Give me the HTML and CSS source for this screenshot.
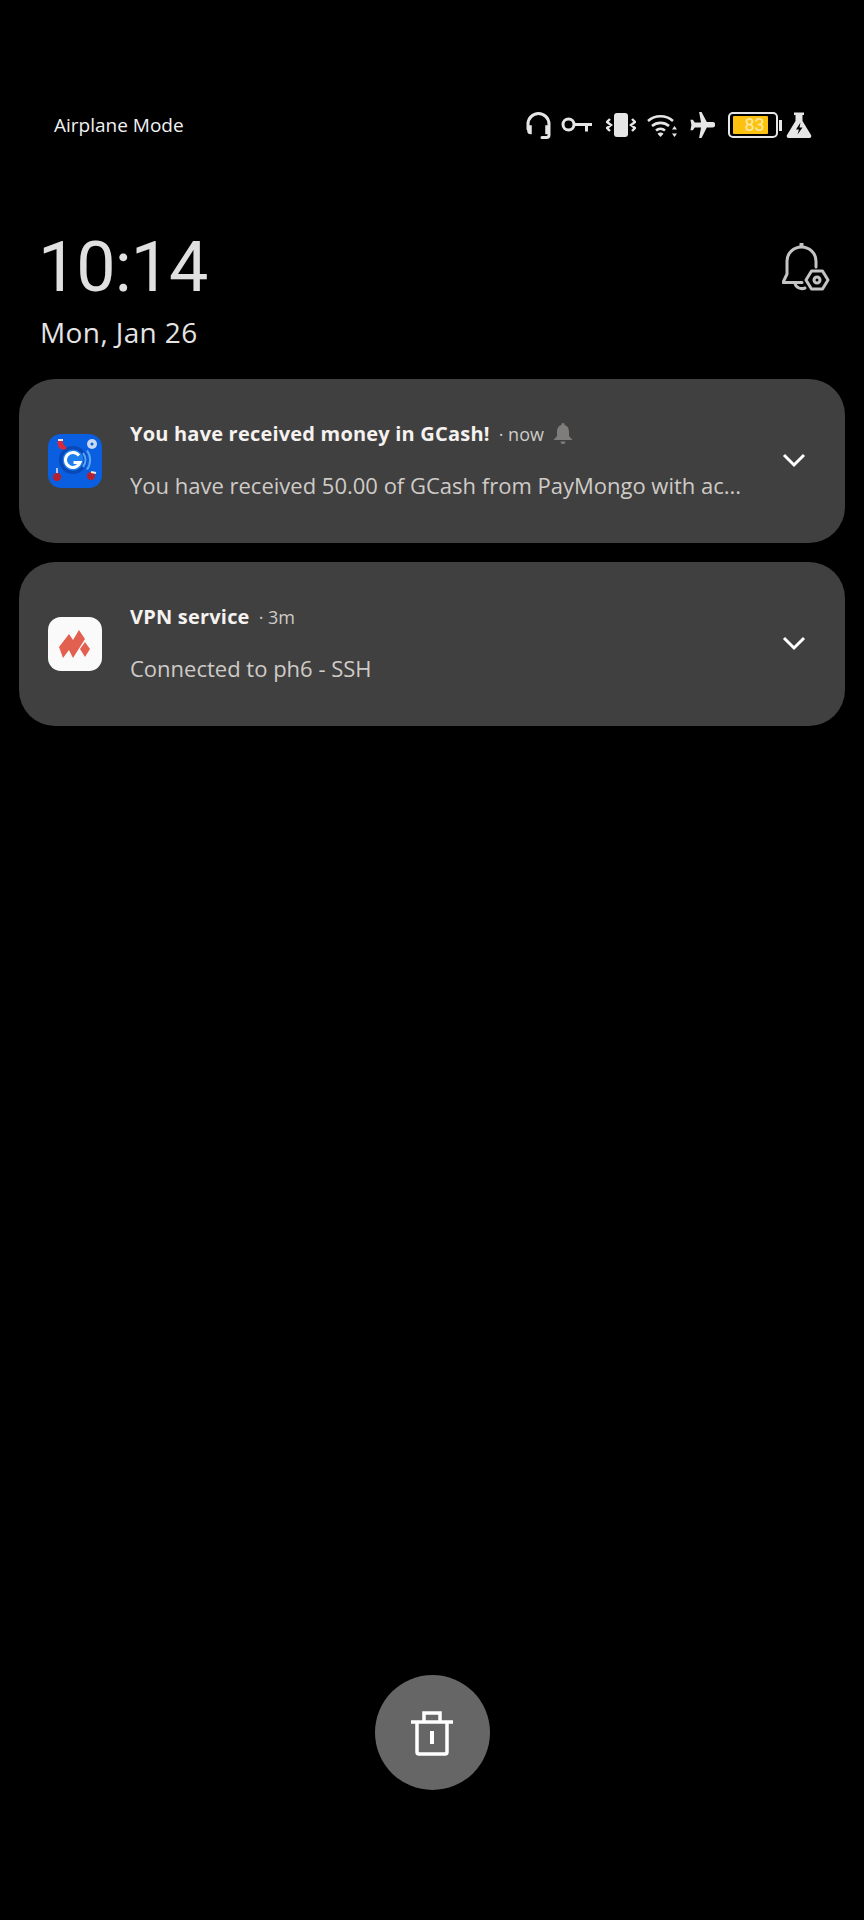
FILE: index.html
```html
<!DOCTYPE html>
<html lang="en">
<head>
    <meta charset="UTF-8">
    <meta name="viewport" content="width=device-width, initial-scale=1.0">
    <title>Notifications</title>
    <link rel="stylesheet" href="styles.css">
</head>
<body>
    <div class="screen">
        <div class="status-bar">
            <span class="carrier">Airplane Mode</span>
            <div class="status-icons">
                <svg class="icon-headset" width="27" height="28" viewBox="0 0 27 28" fill="none" stroke="#e6e6e6" stroke-width="3" stroke-linecap="round">
                    <path d="M3 18V13a10.500 10.500 0 0 1 21 0v11a2.500 2.500 0 0 1-2.500 2.500H17"/>
                    <path d="M3 15v5c0 1.500 1.500 2.500 3 2.500V15z" fill="#e6e6e6" stroke-width="1.500"/>
                    <path d="M24 15v6c0 1-1 1.500-3 1.500V15z" fill="#e6e6e6" stroke-width="1.500"/>
                </svg>
                <svg width="31" height="18" viewBox="0 0 31 18" fill="none" stroke="#e6e6e6" stroke-width="3">
                    <circle cx="7.500" cy="8.500" r="5.500"/>
                    <path d="M13 8.500h18M25.500 8.500v7"/>
                </svg>
                <svg class="icon-vibrate" width="30" height="26" viewBox="0 0 30 26" fill="none" stroke="#e6e6e6" stroke-width="2.400">
                    <rect x="8" y="1" width="14" height="24" rx="3" fill="#e6e6e6" stroke="none"/>
                    <path d="M4 7l-3 3 4 3-4 3 3 3M26 7l3 3-4 3 4 3-3 3"/>
                </svg>
                <svg width="31" height="25" viewBox="0 0 31 25" fill="none" stroke="#e6e6e6" stroke-width="2.600">
                    <path d="M1 8a19 19 0 0 1 25 0M5 13a13 13 0 0 1 17 0M9 17.500a7 7 0 0 1 9 0"/>
                    <path d="M13.500 24l-3-3.200a4 4 0 0 1 6 0z" fill="#e6e6e6" stroke="none"/>
                    <path d="M27.500 13l-2.500 3.500h5zM27.500 24l-2.500-3.500h5z" fill="#e6e6e6" stroke="none"/>
                </svg>
                <svg width="26" height="28" viewBox="0 0 27 28" fill="#e6e6e6">
                    <path d="M10.500 0.500h2.500l5.500 10.500h6a2.500 2.500 0 0 1 0 5.500h-6L13 27.500h-2.500l2-11H6l-2 3H1.500l1-5.500-1-5.500H4l2 3h6.500z"/>
                </svg>
                <div class="battery">
                    <div class="battery-body">
                        <span class="battery-level">83</span>
                    </div>
                    <span class="battery-nub"></span>
                </div>
                <svg width="26" height="26" viewBox="0 0 26 26">
                    <path d="M8 0.500h10v2.500h-1.500v6l8.500 14a2 2 0 0 1-2 3H3a2 2 0 0 1-2-3l8.500-14V3H8z" fill="#e6e6e6"/>
                    <path d="M14.500 10.500l-4.500 7h3l-1.500 5 5-7h-3z" fill="#000"/>
                </svg>
            </div>
        </div>

        <div class="clock-row">
            <div>
                <div class="clock">10:14</div>
                <div class="date">Mon, Jan 26</div>
            </div>
            <svg class="bell-settings" width="48" height="50" viewBox="0 0 48 50" fill="none" stroke="#c4c4c4" stroke-width="3">
                <path d="M19.500 1v2" stroke-linecap="round" stroke-width="4"/>
                <path d="M34 24V18A14.500 14 0 0 0 5 18V31L1 39.500H20" stroke-linejoin="round" stroke-linecap="round"/>
                <path d="M13 40a7 6 0 0 0 10 5" stroke-linecap="round"/>
                <path d="M29.500 28h11l5.500 9-5.500 9h-11l-5.500-9z" stroke-linejoin="round"/>
                <circle cx="35" cy="37" r="3"/>
            </svg>
        </div>

        <div class="notification-list">
            <div class="notification">
                <svg class="app-icon" width="54" height="54" viewBox="0 0 54 54">
                    <rect width="54" height="54" rx="13" fill="#0a5fe0"/>
                    <circle cx="25" cy="26" r="14" fill="#0a48b8"/>
                    <circle cx="25" cy="26" r="10.500" fill="#1d7ef0"/>
                    <path d="M31 21.500a7.500 7.500 0 1 0 1 7h-6.500" fill="none" stroke="#fff" stroke-width="3"/>
                    <path d="M35 19a11 11 0 0 1 0 14M39 16.500a16 16 0 0 1 0 19" fill="none" stroke="#5aa5f5" stroke-width="2"/>
                    <path d="M9 8l5-2 2 5 3 3-3 2-5-2z" fill="#d8283c"/>
                    <path d="M10 5h5v2h-5z" fill="#f3e4e4"/>
                    <circle cx="44" cy="10" r="5" fill="#c9d9f2"/>
                    <circle cx="44" cy="10" r="1.500" fill="#0a5fe0"/>
                    <circle cx="9" cy="43" r="4" fill="#b5202f"/>
                    <path d="M9 34v5" stroke="#e8e8f0" stroke-width="1.500"/>
                    <circle cx="43" cy="42" r="4" fill="#b5202f"/>
                    <path d="M43 38l5 1" stroke="#f3e4e4" stroke-width="2"/>
                </svg>
                <div class="notification-text">
                    <div class="title-line">
                        <span class="title">You have received money in GCash!</span>
                        <span class="meta">· now</span>
                        <svg class="muted-bell" width="20" height="22" viewBox="0 0 20 22" fill="#7f7d7c">
                            <path d="M10 0a1.500 1.500 0 0 1 1.500 2C15 3 16 6 16 9v4l3.500 4H.5L4 13V9c0-3 1-6 4.500-7A1.500 1.500 0 0 1 10 0zM7.500 18.500h5a2.500 2.500 0 0 1-5 0z"/>
                        </svg>
                    </div>
                    <div class="body-line">You have received 50.00 of GCash from PayMongo with ac...</div>
                </div>
                <svg class="chevron" width="24" height="16" viewBox="0 0 24 16" fill="none" stroke="#fff" stroke-width="3">
                    <path d="M2 3l10 10L22 3"/>
                </svg>
            </div>

            <div class="notification">
                <svg class="app-icon" width="54" height="54" viewBox="0 0 54 54">
                    <rect width="54" height="54" rx="13" fill="#fafafa"/>
                    <path d="M11 30l10-13 4 6 6-10 6 9-12 19-4-8-6 8z" fill="#e2604f"/>
                    <path d="M37 25l5 7-5 8-5-8z" fill="#e2604f"/>
                </svg>
                <div class="notification-text">
                    <div class="title-line">
                        <span class="title">VPN service</span>
                        <span class="meta">· 3m</span>
                    </div>
                    <div class="body-line">Connected to ph6 - SSH</div>
                </div>
                <svg class="chevron" width="24" height="16" viewBox="0 0 24 16" fill="none" stroke="#fff" stroke-width="3">
                    <path d="M2 3l10 10L22 3"/>
                </svg>
            </div>
        </div>

        <button class="clear-btn" aria-label="Clear all">
            <svg width="44" height="46" viewBox="0 0 44 46" fill="none" stroke="#fff" stroke-width="3.500">
                <path d="M1 12h42M7 12v30a2 2 0 0 0 2 2h26a2 2 0 0 0 2-2V12M14 12V3h16v9"/>
                <path d="M22 21v13" stroke-width="4"/>
            </svg>
        </button>
    </div>
</body>
</html>
```

FILE: styles.css
```css
* {
    margin: 0;
    padding: 0;
    box-sizing: border-box;
}

body {
    background: #000;
    font-family: "Open Sans", "Noto Sans", sans-serif;
    color: #fff;
}

.screen {
    height: 1920px;
    display: flex;
    flex-direction: column;
    overflow: hidden;
}

.status-bar {
    display: flex;
    justify-content: space-between;
    align-items: center;
    height: 30px;
    margin-top: 110px;
    padding: 0 52px 0 54px;
}

.carrier {
    font-size: 19px;
    color: #f2f2f2;
}

.status-icons {
    display: flex;
    align-items: center;
    gap: 11px;
}

.icon-headset {
    margin-right: -2px;
}

.icon-vibrate {
    margin-left: 3px;
}

.battery {
    display: flex;
    align-items: center;
    gap: 1px;
    margin: 0 -7px 0 2px;
}

.battery-body {
    width: 50px;
    height: 26px;
    padding: 2px 3px;
    border: 2px solid #e6e6e6;
    border-radius: 5px;
    display: flex;
}

.battery-level {
    width: 35px;
    background: #fdc20f;
    border-radius: 1px;
    color: #fbeaa8;
    font-family: Roboto, sans-serif;
    font-size: 18px;
    line-height: 18px;
    text-align: center;
    padding-left: 8px;
}

.battery-nub {
    width: 3px;
    height: 11px;
    background: #e6e6e6;
}

.clock-row {
    display: flex;
    justify-content: space-between;
    align-items: flex-start;
    margin-top: 86px;
    padding: 0 34px 0 38px;
}

.clock {
    font-family: Roboto, sans-serif;
    font-weight: 400;
    font-size: 70px;
    letter-spacing: -1px;
    line-height: 82px;
    color: #e0e0e0;
}

.date {
    font-size: 28px;
    letter-spacing: 0.4px;
    line-height: 36px;
    color: #e4e4e4;
    margin: 6px 0 0 2px;
}

.bell-settings {
    margin-top: 17px;
}

.notification-list {
    display: flex;
    flex-direction: column;
    gap: 19px;
    margin-top: 29px;
    padding: 0 19px;
}

.notification {
    display: flex;
    align-items: center;
    height: 164px;
    padding: 0 39px 0 29px;
    background: #404040;
    border-radius: 36px;
}

.app-icon {
    flex-shrink: 0;
}

.notification-text {
    flex: 1;
    margin: -4px 0 0 28px;
    display: flex;
    flex-direction: column;
    gap: 21px;
}

.title-line {
    display: flex;
    align-items: center;
    gap: 9px;
    height: 30px;
}

.title {
    font-size: 20px;
    letter-spacing: 0.2px;
    font-weight: 700;
    color: #f5f2ef;
}

.meta {
    font-size: 18px;
    color: #cfcbc7;
}

.body-line {
    font-size: 22px;
    line-height: 30px;
    color: #cfcbc7;
    white-space: nowrap;
}

.chevron {
    flex-shrink: 0;
    margin-top: -2px;
}

.clear-btn {
    width: 115px;
    height: 115px;
    margin: auto auto 130px;
    display: flex;
    align-items: center;
    justify-content: center;
    border: none;
    border-radius: 50%;
    background: #666;
}
```
